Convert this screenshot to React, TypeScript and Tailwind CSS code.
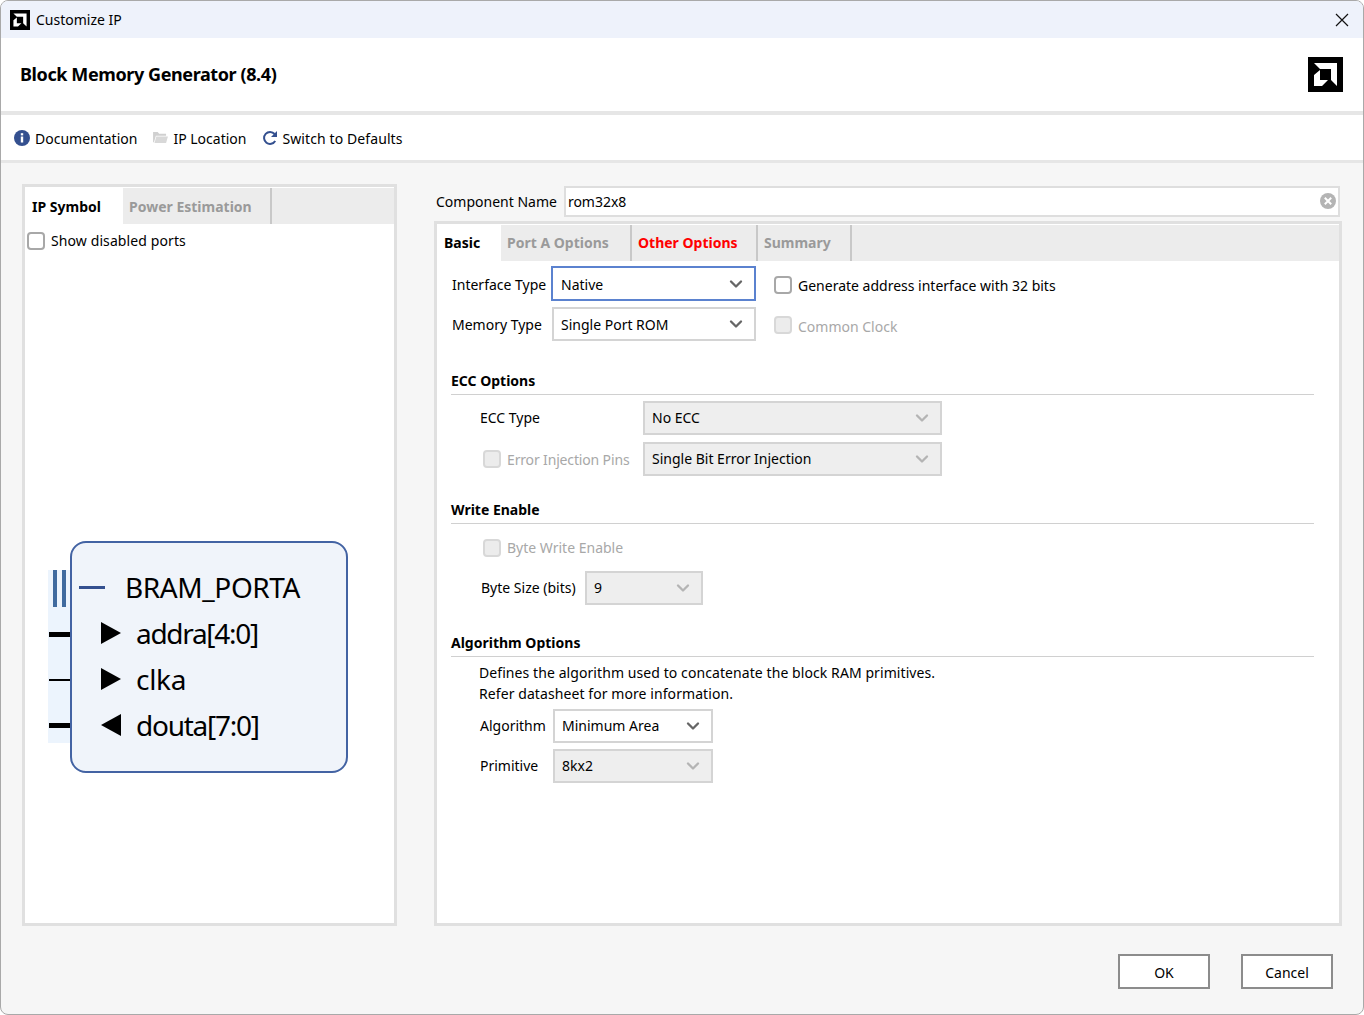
import { ChevronDown } from "lucide-react";

const font = { fontFamily: '"Noto Sans", sans-serif' };

function AmdLogo({ className }: { className: string }) {
  return (
    <svg viewBox="0 0 35 35" className={className}>
      <rect width="35" height="35" fill="#000" />
      <path d="M6 6H29V29L23 23V12H12Z" fill="#fff" />
      <path d="M6 18L12 13V23H20L14 29H6Z" fill="#fff" />
    </svg>
  );
}

function Select({
  value,
  className,
  disabled = false,
  focused = false,
  textClass = "",
}: {
  value: string;
  className: string;
  disabled?: boolean;
  focused?: boolean;
  textClass?: string;
}) {
  const tone = disabled ? "bg-[#eeeeee] border-[#d4d4d4]" : "bg-white border-[#d4d4d4]";
  return (
    <div
      className={`flex items-center justify-between pr-[8px] ${
        focused ? "pl-[8px] border-2 border-[#5b82cf] bg-white" : `pl-[7px] border-2 ${tone}`
      } ${className}`}
    >
      <span className={`text-black ${textClass}`}>{value}</span>
      <ChevronDown size={20} strokeWidth={2.8} className={disabled ? "text-[#b4b4b4]" : "text-[#666666]"} />
    </div>
  );
}

function Check({
  label,
  disabled = false,
  textClass = "",
}: {
  label: string;
  disabled?: boolean;
  textClass?: string;
}) {
  return (
    <div className="flex items-center gap-[6px]">
      <span
        className={`w-[18px] h-[18px] rounded-[4px] border-2 ${
          disabled ? "bg-[#ececec] border-[#d8d8d8]" : "bg-white border-[#a8a8a8]"
        }`}
      />
      <span className={`${disabled ? "text-[#a8a8a8]" : "text-black"} ${textClass}`}>{label}</span>
    </div>
  );
}

function Section({ title }: { title: string }) {
  return (
    <div className="h-[18px] border-b border-[#d0d0d0] box-content pb-[4px]">
      <h3 className="font-bold leading-[17px] text-black">{title}</h3>
    </div>
  );
}

function Port({ dir, name, track }: { dir: "in" | "out"; name: string; track: string }) {
  return (
    <div className="h-[46px] flex items-center">
      <svg viewBox="0 0 20 22" className="w-[20px] h-[22px] ml-[29px] mr-[15px]">
        <path d={dir === "in" ? "M0 0L20 11L0 22Z" : "M20 0L0 11L20 22Z"} fill="#000" />
      </svg>
      <span className={`text-[28px] leading-[46px] text-black ${track}`}>{name}</span>
    </div>
  );
}

export default function App() {
  return (
    <div
      style={font}
      className="w-[1364px] h-[1015px] flex flex-col bg-[#f6f6f6] border border-[#a9a9a9] rounded-t-[8px] rounded-b-[8px] overflow-hidden text-[14px] text-black"
    >
      {/* title bar */}
      <div className="h-[37px] shrink-0 bg-[#eef2fb] flex items-center justify-between pl-[9px] pr-[14px]">
        <div className="flex items-center gap-[6px]">
          <AmdLogo className="w-[20px] h-[20px]" />
          <span>Customize IP</span>
        </div>
        <svg viewBox="0 0 14 14" className="w-[14px] h-[14px]">
          <path d="M1 1L13 13M13 1L1 13" stroke="#111" strokeWidth="1.2" fill="none" />
        </svg>
      </div>

      {/* header */}
      <div className="h-[73px] shrink-0 bg-white flex items-center justify-between pl-[19px] pr-[20px]">
        <h1 className="text-[18px] font-bold tracking-[-0.4px]">Block Memory Generator (8.4)</h1>
        <AmdLogo className="w-[35px] h-[35px] mt-[-1px]" />
      </div>

      {/* toolbar */}
      <div className="h-[52px] shrink-0 bg-white border-t-[4px] border-b-[3px] border-[#e6e6e6] flex items-center pl-[13px] gap-[16px]">
        <div className="flex items-center gap-[5px]">
          <svg viewBox="0 0 16 16" className="w-[16px] h-[16px]">
            <circle cx="8" cy="8" r="8" fill="#34508f" />
            <rect x="6.8" y="6.5" width="2.4" height="6" fill="#fff" />
            <rect x="6.8" y="3.2" width="2.4" height="2.2" fill="#fff" />
          </svg>
          <span className="pt-[2px]">Documentation</span>
        </div>
        <div className="flex items-center gap-[5px]">
          <svg viewBox="0 0 16 14" className="w-[15px] h-[13px]">
            <path d="M0 1H5L6.5 3H14V5H3L1 12H0Z" fill="#d0d0d0" />
            <path d="M3.5 6H16L14 13H1.5Z" fill="#d8d8d8" />
          </svg>
          <span className="pt-[2px]">IP Location</span>
        </div>
        <div className="flex items-center gap-[4px]">
          <svg viewBox="0 0 16 16" className="w-[16px] h-[16px]" fill="none">
            <path d="M13.2 11A6 6 0 1 1 12.6 4" stroke="#34508f" strokeWidth="2" />
            <path d="M15 1V7H9Z" fill="#34508f" />
          </svg>
          <span className="pt-[2px] tracking-[0.1px]">Switch to Defaults</span>
        </div>
      </div>

      {/* body */}
      <div className="flex gap-[37px] pl-[21px] pt-[21px] h-[763px] shrink-0">
        {/* left panel */}
        <div className="w-[375px] h-[742px] border-[3px] border-[#e0e0e0] bg-white flex flex-col">
          <div className="h-[36px] mt-px shrink-0 bg-[#ececec] flex">
            <div className="w-[98px] bg-white pl-[7px] flex items-center font-bold">IP Symbol</div>
            <div className="w-[149px] pl-[6px] flex items-center font-bold text-[#9a9a9a] border-r-[2px] border-[#c8c8c8]">
              Power Estimation
            </div>
          </div>
          <div className="pl-[2px] pt-[6px]">
            <Check label="Show disabled ports" textClass="tracking-[0.1px]" />
          </div>

          {/* symbol */}
          <div className="relative ml-[23px] mt-[290px] h-[232px] w-[300px]">
            <div className="absolute left-0 top-[29px] w-[23px] h-[173px] bg-[#ecf4fd]" />
            <div className="absolute left-[5px] top-[29px] flex gap-[5px]">
              <span className="w-[4px] h-[37px] bg-[#3f6a9f]" />
              <span className="w-[4px] h-[37px] bg-[#3f6a9f]" />
            </div>
            <div className="absolute left-px top-[91px] w-[22px] h-[5px] bg-black" />
            <div className="absolute left-px top-[138px] w-[22px] h-[2px] bg-black" />
            <div className="absolute left-px top-[182px] w-[22px] h-[5px] bg-black" />
            <div className="absolute left-[22px] top-0 w-[278px] h-[232px] rounded-[16px] border-2 border-[#4363a3] bg-[#f0f4fa] pt-[21px]">
              <div className="h-[46px] flex items-center">
                <span className="w-[26px] h-[3px] ml-[7px] mr-[20px] bg-[#34508f]" />
                <span className="text-[28px] leading-[46px] tracking-[-0.4px]">BRAM_PORTA</span>
              </div>
              <Port dir="in" name="addra[4:0]" track="tracking-[-1.3px]" />
              <Port dir="in" name="clka" track="tracking-[-0.3px]" />
              <Port dir="out" name="douta[7:0]" track="tracking-[-1.25px]" />
            </div>
          </div>
        </div>

        {/* right panel */}
        <div className="w-[908px] flex flex-col">
          <div className="h-[32px] mt-px flex items-center gap-[7px] pl-[2px] pr-[2px]">
            <span>Component Name</span>
            <div className="flex-1 h-[31px] border-2 border-[#dedede] bg-white flex items-center justify-between pl-[2px] pr-[2px]">
              <span>rom32x8</span>
              <svg viewBox="0 0 16 16" className="w-[16px] h-[16px]">
                <circle cx="8" cy="8" r="8" fill="#b4b4b4" />
                <path d="M4.8 4.8L11.2 11.2M11.2 4.8L4.8 11.2" stroke="#fff" strokeWidth="2" />
              </svg>
            </div>
          </div>

          <div className="mt-[4px] h-[705px] border-[3px] border-[#e0e0e0] bg-white flex flex-col">
            <div className="h-[36px] mt-px shrink-0 bg-[#ececec] flex font-bold">
              <div className="w-[64px] bg-white pl-[7px] pb-[2px] flex items-center">Basic</div>
              <div className="w-[131px] pl-[6px] pb-[2px] flex items-center text-[#9a9a9a] border-r-[2px] border-[#c8c8c8]">Port A Options</div>
              <div className="w-[126px] pl-[6px] pb-[2px] flex items-center text-[#ff0000] border-r-[2px] border-[#c8c8c8]">Other Options</div>
              <div className="w-[94px] pl-[6px] pb-[2px] flex items-center text-[#9a9a9a] border-r-[2px] border-[#c8c8c8]">Summary</div>
            </div>

            <div className="flex flex-col pl-[14px] w-[877px]">
              {/* interface / memory */}
              <div className="flex items-center mt-[5px] pl-px">
                <span className="w-[99px] pt-[2px]">Interface Type</span>
                <Select value="Native" focused className="w-[205px] h-[35px]" textClass="pt-[2px]" />
                <div className="ml-[18px] mt-[2px]">
                  <Check label="Generate address interface with 32 bits" textClass="pt-[2px]" />
                </div>
              </div>
              <div className="flex items-center mt-[6px] pl-px">
                <span className="w-[100px]">Memory Type</span>
                <Select value="Single Port ROM" className="w-[204px] h-[34px]" />
                <div className="ml-[18px] mt-[2px]">
                  <Check label="Common Clock" disabled textClass="pt-[2px]" />
                </div>
              </div>

              <div className="mt-[31px]">
                <Section title="ECC Options" />
              </div>
              <div className="flex items-center mt-[6px] pl-[29px]">
                <span className="w-[163px] pb-[2px]">ECC Type</span>
                <Select value="No ECC" disabled className="w-[299px] h-[34px]" textClass="pb-[2px]" />
              </div>
              <div className="flex items-center mt-[7px] pl-[32px]">
                <div className="w-[160px]">
                  <Check label="Error Injection Pins" disabled textClass="tracking-[-0.15px]" />
                </div>
                <Select value="Single Bit Error Injection" disabled className="w-[299px] h-[34px]" textClass="pb-[2px]" />
              </div>

              <div className="mt-[25px]">
                <Section title="Write Enable" />
              </div>
              <div className="mt-[13px] pl-[32px]">
                <Check label="Byte Write Enable" disabled />
              </div>
              <div className="flex items-center mt-[13px] pl-[30px]">
                <span className="w-[104px] pb-[2px]">Byte Size (bits)</span>
                <Select value="9" disabled className="w-[118px] h-[34px]" textClass="pb-[2px]" />
              </div>

              <div className="mt-[29px]">
                <Section title="Algorithm Options" />
              </div>
              <div className="pl-[28px] pt-[5px] leading-[21px] tracking-[0.08px]">
                <p>Defines the algorithm used to concatenate the block RAM primitives.</p>
                <p>Refer datasheet for more information.</p>
              </div>
              <div className="flex items-center mt-[5px] pl-[29px]">
                <span className="w-[73px] pb-[2px]">Algorithm</span>
                <Select value="Minimum Area" className="w-[160px] h-[34px]" textClass="pb-[2px]" />
              </div>
              <div className="flex items-center mt-[6px] pl-[29px]">
                <span className="w-[73px] pb-[2px]">Primitive</span>
                <Select value="8kx2" disabled className="w-[160px] h-[34px]" textClass="pb-[2px]" />
              </div>
            </div>
          </div>
        </div>
      </div>

      {/* footer */}
      <div className="flex justify-end gap-[31px] pr-[30px] mt-[28px]">
        <button className="w-[92px] h-[35px] pt-[2px] border-2 border-[#8c8c8c] bg-white">OK</button>
        <button className="w-[92px] h-[35px] pt-[2px] border-2 border-[#8c8c8c] bg-white">Cancel</button>
      </div>
    </div>
  );
}
